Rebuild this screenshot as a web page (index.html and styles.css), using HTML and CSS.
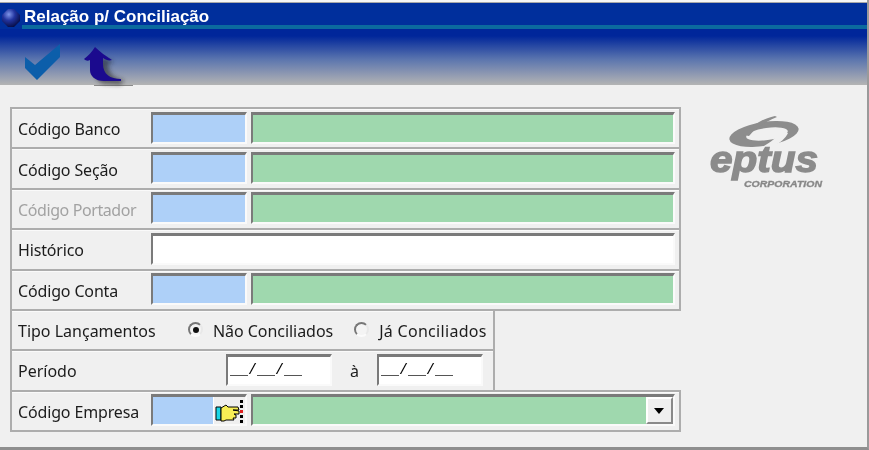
FILE: index.html
```html
<!DOCTYPE html>
<html lang="pt">
<head>
<meta charset="utf-8">
<title>Relação p/ Conciliação</title>
<link rel="stylesheet" href="styles.css">
</head>
<body>
<div class="window">
  <header class="head">
    <div class="titlebar">
      <svg class="orb" width="18" height="18" viewBox="0 0 18 18">
        <defs><radialGradient id="orbg" cx="0.38" cy="0.3" r="0.75">
          <stop offset="0" stop-color="#7f96ea"/><stop offset="0.45" stop-color="#22349f"/><stop offset="1" stop-color="#050a40"/>
        </radialGradient></defs>
        <path d="M6 0h6l6 6v6l-6 6H6l-6-6V6z" fill="url(#orbg)"/>
      </svg>
      <span class="title">Relação p/ Conciliação</span>
    </div>
    <div class="toolbar">
      <svg class="tool" width="110" height="44" viewBox="0 0 110 44">
        <defs><filter id="sh" x="-40%" y="-40%" width="180%" height="180%"><feGaussianBlur stdDeviation="2"/></filter></defs>
        <path d="M1 13 L11 21 L36 0 L36 13 L13 36 L1 24z" fill="#0c5eaa"/>
        <rect x="70" y="41" width="39" height="1" fill="#8a8a8a"/>
        <path d="M79 14 L90 18 L84 20 C85 30 90 34 100 36 L97 41 L80 40 C72 38 70 30 70 20z" fill="#222" opacity=".55" filter="url(#sh)"/>
        <path d="M71 3 C68 8 64 12 60 15 C62 17 64 17 66 16 L66 26 C66 32 71 37 80 37 L97 37 L97 35 C86 35 79 30 79 20 L79 14 C82 16 85 17 88 16 C82 12 76 8 71 3z" fill="#1b0a8e"/>
      </svg>
    </div>
  </header>
  <main class="body">
    <section class="form">
      <div class="row"><span class="label">Código Banco</span><span class="field code"></span><span class="field name"></span></div>
      <div class="row"><span class="label">Código Seção</span><span class="field code"></span><span class="field name"></span></div>
      <div class="row"><span class="label disabled">Código Portador</span><span class="field code"></span><span class="field name"></span></div>
      <div class="row"><span class="label">Histórico</span><span class="field hist"></span></div>
      <div class="row"><span class="label">Código Conta</span><span class="field code"></span><span class="field name"></span></div>
      <div class="row narrow tipo">
        <span class="label">Tipo Lançamentos</span>
        <span class="radio on"></span><span class="opt">Não Conciliados</span>
        <span class="radio"></span><span class="opt">Já Conciliados</span>
      </div>
      <div class="row narrow periodo">
        <span class="label">Período</span>
        <span class="field date">__/__/__</span><span class="a">à</span><span class="field date">__/__/__</span>
      </div>
      <div class="row last">
        <span class="label">Código Empresa</span>
        <span class="field code lookup">
          <span class="pick">
            <svg width="32" height="28" viewBox="0 0 32 28">
              <path d="M3 10h5v13H3z" fill="#19d6e6" stroke="#000"/>
              <path d="M8 11l5-3 2 2h10l1 3h-6l6 1v3h-5l2 1v3h-3l1 2h-8l-2 1H8z" fill="#f7ee55" stroke="#000"/>
              <path d="M27 3h3v3h-3zM27 8h3v3h-3z" fill="#000"/><path d="M27 13h3v3h-3z" fill="#e02020"/><path d="M27 18h3v3h-3zM27 23h3v3h-3z" fill="#000"/>
            </svg>
          </span>
        </span>
        <span class="field name combo"><span class="drop"></span></span>
      </div>
    </section>
    <aside class="logo">
      <svg width="116" height="74" viewBox="0 0 116 74">
        <ellipse cx="54" cy="20" rx="35" ry="12" transform="rotate(-9 54 20)" fill="#8d8d8d"/>
        <ellipse cx="57" cy="20" rx="21" ry="6" transform="rotate(-8 57 20)" fill="#f0f0f0"/>
        <path d="M33 21C41 11 53 5 65 2L67 3C55 8 45 14 39 22z" fill="#8d8d8d"/>
        <path d="M70 19C64 27 54 32 45 37L62 33C70 29 76 24 78 19z" fill="#f0f0f0"/>
        <text class="logo-word" x="0" y="58" textLength="108" lengthAdjust="spacingAndGlyphs">eptus</text>
        <text class="logo-sub" x="34" y="73" textLength="78" lengthAdjust="spacingAndGlyphs">CORPORATION</text>
      </svg>
    </aside>
  </main>
</div>
</body>
</html>
```
FILE: styles.css
```css
* { box-sizing: border-box; }
html, body { margin: 0; padding: 0; }
body { width: 869px; height: 450px; overflow: hidden; background: #f0f0f0; font-family: "Noto Sans", "Liberation Sans", sans-serif; }
.window { width: 869px; height: 450px; display: flex; flex-direction: column; background: #f0f0f0; border-right: 2px solid #9a9a9a; border-bottom: 3px solid #8f8f8f; filter: blur(.4px); }
.head { height: 85px; padding-top: 2px; background: #f6f6f6; }
.titlebar { height: 27px; display: flex; align-items: flex-start; gap: 2px; padding: 6px 0 0 2px; background: #002f9c; border-top: 1px solid #a8a8a8; }
.orb { flex: none; }
.title { flex: 1; height: 21px; color: #fff; font: bold 17px/17px "Liberation Sans", sans-serif; padding-left: 2px; margin-top: -1px; border-bottom: 4px solid #0b6a9e; }
.toolbar { height: 56px; padding: 15px 0 0 24px; background: linear-gradient(#00269a 0, #00269a 7px, #5a74ae 30px, #b4b4b4 56px); }
.tool { display: block; overflow: visible; }
.body { flex: 1; display: flex; align-items: flex-start; padding: 22px 0 0 10px; }
.form { width: 671px; display: grid; grid-template-rows: repeat(8, 40.400px); justify-items: start; }
.row { width: 671px; height: calc(100% + 2px); display: flex; align-items: center; padding: 0 0 1px 6px; border: 2px solid #adadad; box-shadow: inset 0 1px 0 #fafafa; font-size: 16px; color: #1c1c1c; }
.row.narrow { width: 485px; }
.label { flex: none; width: 133px; padding-top: 3px; white-space: nowrap; letter-spacing: -.15px; }
.disabled { color: #a2a2a2; letter-spacing: -.4px; }
.field { display: block; flex: none; height: 32px; border-style: solid; border-width: 3px 2px 2px 2px; border-color: #7a7a7a #fafafa #fafafa #7a7a7a; }
.code { width: 96px; background: #aed0f8; }
.name { width: 424px; margin-left: 4px; background: #9fd8ae; }
.hist { width: 524px; background: #fff; }
.lookup { position: relative; }
.pick { position: absolute; right: 0; top: 0; width: 32px; height: 27px; background: #efefef; border-left: 1px solid #fff; }
.pick svg { display: block; margin-left: -1px; }
.combo { position: relative; }
.drop { position: absolute; right: 0; top: 0; width: 27px; height: 27px; background: #efefef; border: 2px solid; border-color: #fff #8a8a8a #8a8a8a #fff; }
.drop::after { content: ""; position: absolute; left: 6px; top: 9px; border: 5.500px solid transparent; border-top: 6px solid #000; border-bottom: 0; }
.radio { flex: none; position: relative; width: 15px; height: 15px; margin-left: 37px; border-radius: 50%; background: #f4f4f4; border: 2px solid; border-color: #777 #e8e8e8 #fbfbfb #777; }
.radio + .opt + .radio { margin-left: 21px; }
.radio.on::after { content: ""; position: absolute; left: 2.500px; top: 2.500px; width: 6px; height: 6px; border-radius: 50%; background: #111; }
.opt { margin-left: 10px; white-space: nowrap; letter-spacing: -.05px; padding-top: 2px; }
.radio + .opt + .radio + .opt { letter-spacing: .3px; }
.tipo .label { letter-spacing: 0; padding-top: 2px; }
.periodo .label { width: 208px; letter-spacing: 0; padding-top: 2px; }
.date { width: 106px; height: 32px; background: #fff; font: 15px/27px "Liberation Mono", monospace; padding-left: 2px; color: #000; }
.a { width: 45px; text-align: center; padding-top: 2px; }
.logo { margin: 7px 0 0 29px; }
.logo svg { display: block; }
.logo-word { font: italic bold 36px "Liberation Sans", sans-serif; fill: #8b8b8b; stroke: #8b8b8b; stroke-width: 1.400; }
.logo-sub { font: italic bold 9px "Liberation Sans", sans-serif; fill: #888; stroke: #888; stroke-width: .3; }
```
